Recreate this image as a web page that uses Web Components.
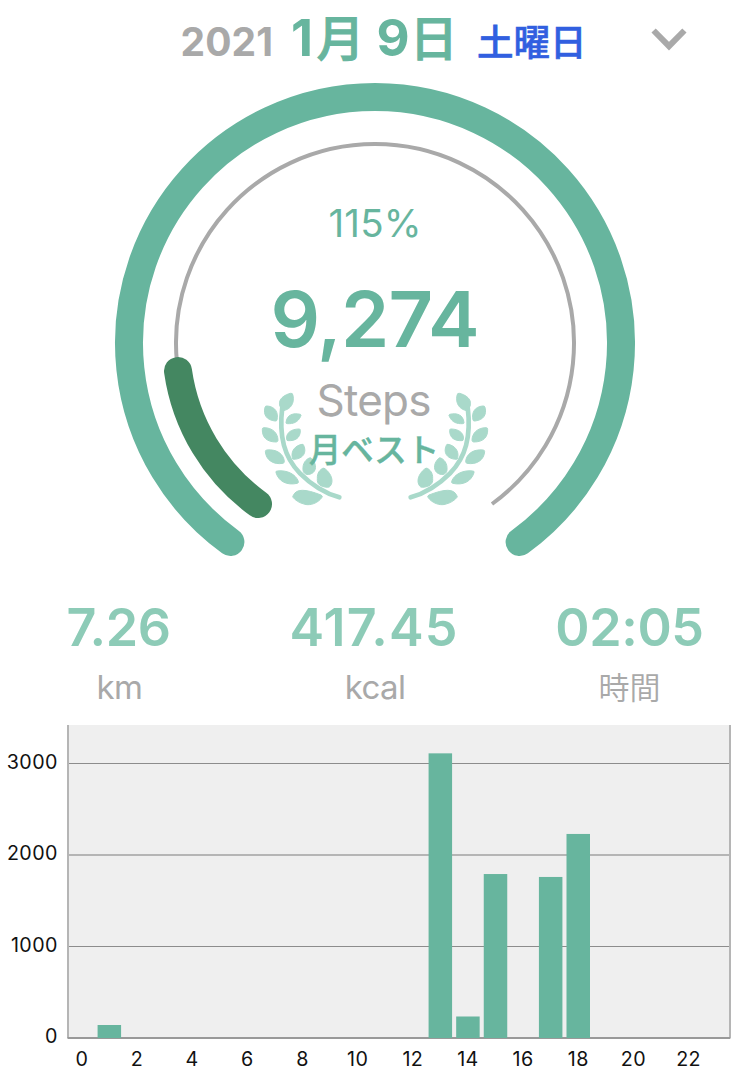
<!DOCTYPE html>
<html lang="ja">
<head>
<meta charset="utf-8">
<title>歩数計</title>
<style>
body{margin:0;background:#fff;font-family:Inter,"Noto Sans CJK JP",sans-serif}
</style>
</head>
<body>
<step-app></step-app>
<script>
const define = (name, html, after) => customElements.define(name, class extends HTMLElement {
  connectedCallback() {
    const root = this.attachShadow({mode: 'open'});
    root.innerHTML = html;
    if (after) after(root, this);
  }
});

define('date-header', `
<style>
:host{display:grid;grid-template-columns:180.5px 110.5px 186px 174px 1fr;height:80px;align-items:baseline;white-space:nowrap;font-weight:700;line-height:76px}
.year{grid-column:2;font-size:39px;font-weight:650;color:#a9a9a9;letter-spacing:.1px}
.day{font-size:51px;font-weight:680;color:#67b59e}
.day i{display:inline-block;font:500 48px "Noto Sans CJK JP",sans-serif;line-height:1;-webkit-text-stroke:1px #67b59e;transform:translateY(-.5px)}
.week{font:500 36.5px "Noto Sans CJK JP",sans-serif;line-height:1;color:#315fe0;-webkit-text-stroke:.6px #315fe0;transform:translateY(.3px)}
svg{display:block;align-self:start;margin-top:24px}
</style>
<span class="year">2021</span><span class="day">1<i style="margin-left:3.5px">月</i> 9<i>日</i></span><span class="week">土曜日</span>
<svg width="36" height="30"><path d="M2.6 6.5 18 22.2 33.4 6.5" fill="none" stroke="#a9a9a9" stroke-width="6"/></svg>`);

define('step-gauge', `
<style>:host{display:block;height:510px}svg{display:block}text{text-anchor:middle}</style>
<svg width="750" height="510" viewBox="0 80 750 510" fill="none">
<path d="M230.4 542A246 246 0 1 1 519.6 542" stroke="#67b59e" stroke-width="28" stroke-linecap="round"/>
<path d="M258 504A199 199 0 1 1 492 504" stroke="#a9a9a9" stroke-width="4"/>
<path d="M258 504A199 199 0 0 1 178 371" stroke="#448761" stroke-width="28" stroke-linecap="round"/>
<defs><g id="laurel" transform="translate(250 370) scale(.33333)" fill="#a9d9ca" stroke="#a9d9ca" stroke-width="3">
<path d="M97 110C86 200 103 262 150 310C185 345 225 370 268 382" fill="none" stroke-width="14" stroke-linecap="round"/>
<path d="M121 70Q128 68 129 76C134 100 122 118 100 122C80 105 85 80 121 70Z"/>
<path d="M45 112Q46 107 52 108C76 110 86 128 81 150Q80 154 75 153C50 150 39 135 45 112Z"/>
<path d="M108 158C110 134 130 128 151 133Q155 134 152 139C144 157 130 162 112 161Q108 161 108 158Z"/>
<path d="M37 178Q37 173 42 173C68 173 84 190 84 211Q84 215 79 216C50 216 36 202 37 178Z"/>
<path d="M110 208C107 188 125 177 147 177Q152 177 151 182C151 204 136 213 114 212Q110 212 110 208Z"/>
<path d="M46 245Q46 240 51 240C80 237 101 252 103 274Q104 278 99 280C70 285 48 270 46 245Z"/>
<path d="M127 263C122 242 137 226 156 223Q160 222 161 226C171 247 160 267 131 268Q127 268 127 263Z"/>
<path d="M78 308Q76 303 82 303C112 299 138 314 145 334Q147 338 142 340C110 347 86 334 78 308Z"/>
<path d="M159 300C157 280 168 268 178 264Q182 262 185 266C202 283 199 305 184 311C172 317 160 312 159 300Z"/>
<path d="M202 325C201 308 211 299 218 295Q222 293 226 297C246 313 251 335 241 348Q239 352 232 352C211 350 200 343 202 325Z"/>
<path d="M130 376C139 356 165 356 213 375Q219 378 216 382C204 400 180 407 165 403C148 399 136 391 129 382Q127 379 130 376Z"/>
</g></defs>
<use href="#laurel"/><use href="#laurel" transform="matrix(-1 0 0 1 750 0)"/>
<g fill="#67b59e">
<text x="375" y="237" font-size="38.5" textLength="93" font-weight="400">115%</text>
<text x="375" y="347" font-size="77.5" textLength="209" font-weight="600">9,274</text>
<text x="374" y="461.5" font-size="32.5" font-weight="500" stroke="#67b59e" stroke-width=".4" font-family="Noto Sans CJK JP">月ベスト</text></g>
<text x="374" y="415.5" font-size="44" textLength="115" fill="#a9a9a9">Steps</text>
</svg>`);

define('stat-item', `
<style>
:host{display:flex;flex-direction:column;align-items:center}
b{font-size:52px;font-weight:580;line-height:76px;height:74px;margin-left:-2px;color:#8dcbb7}
span{font-size:33px;line-height:46px;color:#a9a9a9;font-weight:400}
</style>
<b><slot name="value"></slot></b><span><slot></slot></span>`);

define('stat-row', `
<style>:host{display:grid;grid-template-columns:repeat(3,255.5px);justify-content:center;height:135px;overflow:hidden}
[slot]{letter-spacing:-.4px}</style>
<stat-item><span slot="value">7.26</span><span style="letter-spacing:-.6px">km</span></stat-item>
<stat-item><span slot="value" style="letter-spacing:1.1px">417.45</span><span style="letter-spacing:-.6px">kcal</span></stat-item>
<stat-item><span slot="value">02:05</span><span style="display:block;font:350 31px 'Noto Sans CJK JP';line-height:46px;margin:-1.5px 2px 0 0">時間</span></stat-item>`);

define('hour-chart', `
<style>:host{display:block;height:354px}svg{display:block}text{font-size:19.7px;fill:#111;letter-spacing:.4px}</style>
<svg width="750" height="354" viewBox="0 725 750 354"></svg>`, root => {
  const left = 68, right = 730, base = 1038, slot = (right - left) / 24;
  const steps = {1: 142, 13: 3111, 14: 235, 15: 1792, 17: 1760, 18: 2230};
  let s = `<rect x="${left}" y="725" width="662" height="313" fill="#efefef"/>`;
  for (const [v, y, h] of [[3000, 763, 1], [2000, 854, 2], [1000, 946, 1]])
    s += `<rect x="${left}" y="${y}" width="662" height="${h}" fill="${h === 1 ? '#8c8c8c' : '#b5b5b5'}"/>`;
  for (const [v, y] of [[3000, 769.3], [2000, 860.3], [1000, 952.3], [0, 1043.3]])
    s += `<text x="57.8" y="${y}" text-anchor="end">${v}</text>`;
  s += `<path d="M68 725V1038M730 725V1038.5" stroke="#b5b5b5" stroke-width="2"/><path d="M67.5 1038H730" stroke="#999" stroke-width="2"/>`;
  for (const h in steps) {
    const t = base - steps[h] * .0915;
    s += `<rect x="${left + h * slot + 2}" y="${t}" width="23.5" height="${base - t}" fill="#67b59e"/>`;
  }
  for (let h = 0; h < 24; h += 2)
    s += `<text x="${left + (h + .5) * slot}" y="1066" text-anchor="middle">${h}</text>`;
  root.querySelector('svg').innerHTML = s;
});

define('step-app', `
<style>:host{display:flex;flex-direction:column;width:750px;height:1079px;overflow:hidden;background:#fff}</style>
<date-header></date-header><step-gauge></step-gauge><stat-row></stat-row><hour-chart></hour-chart>`);
</script>
</body>
</html>
